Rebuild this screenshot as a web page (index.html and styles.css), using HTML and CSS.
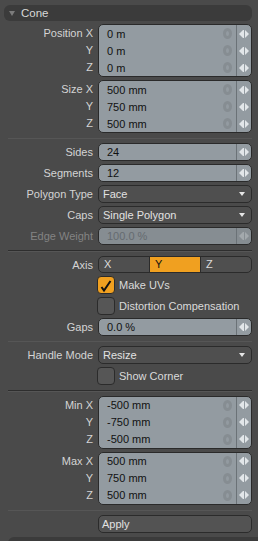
FILE: index.html
```html
<!DOCTYPE html>
<html lang="en">
<head>
    <meta charset="UTF-8">
    <title>Cone</title>
    <link rel="stylesheet" href="styles.css">
</head>
<body>
<div class="panel">

    <div class="header"><span class="caret"></span>Cone</div>

    <!-- Position / Size -->
    <div class="group">
        <div class="labels"><span>Position X</span><span>Y</span><span>Z</span></div>
        <div class="box">
            <div class="frow"><span class="val">0 m</span><span class="reset"></span><span class="spin"></span></div>
            <div class="frow"><span class="val">0 m</span><span class="reset"></span><span class="spin"></span></div>
            <div class="frow"><span class="val">0 m</span><span class="reset"></span><span class="spin"></span></div>
        </div>
    </div>
    <div class="group">
        <div class="labels"><span>Size X</span><span>Y</span><span>Z</span></div>
        <div class="box">
            <div class="frow"><span class="val">500 mm</span><span class="reset"></span><span class="spin"></span></div>
            <div class="frow"><span class="val">750 mm</span><span class="reset"></span><span class="spin"></span></div>
            <div class="frow"><span class="val">500 mm</span><span class="reset"></span><span class="spin"></span></div>
        </div>
    </div>

    <div class="sep"></div>

    <div class="row">
        <label>Sides</label>
        <div class="box single"><div class="frow"><span class="val">24</span><span class="spin"></span></div></div>
    </div>
    <div class="row">
        <label>Segments</label>
        <div class="box single"><div class="frow"><span class="val">12</span><span class="spin"></span></div></div>
    </div>
    <div class="row">
        <label>Polygon Type</label>
        <div class="drop">Face<span class="arrow"></span></div>
    </div>
    <div class="row">
        <label>Caps</label>
        <div class="drop">Single Polygon<span class="arrow"></span></div>
    </div>
    <div class="row disabled">
        <label>Edge Weight</label>
        <div class="box single"><div class="frow"><span class="val">100.0 %</span><span class="spin"></span></div></div>
    </div>

    <div class="sep"></div>

    <div class="row axis-row">
        <label>Axis</label>
        <div class="seg">
            <span>X</span>
            <span class="on">Y</span>
            <span>Z</span>
        </div>
    </div>
    <div class="row">
        <label></label>
        <div class="check on"><svg width="16" height="16" viewBox="0 0 16 16"><path d="M3.5 10 L6 13.5 L12.5 4" fill="none" stroke="#111" stroke-width="2"/></svg></div>
        <span class="check-text">Make UVs</span>
    </div>
    <div class="row">
        <label></label>
        <div class="check"></div>
        <span class="check-text">Distortion Compensation</span>
    </div>
    <div class="row">
        <label>Gaps</label>
        <div class="box single"><div class="frow"><span class="val">0.0 %</span><span class="spin"></span></div></div>
    </div>

    <div class="sep"></div>

    <div class="row">
        <label>Handle Mode</label>
        <div class="drop">Resize<span class="arrow"></span></div>
    </div>
    <div class="row">
        <label></label>
        <div class="check"></div>
        <span class="check-text">Show Corner</span>
    </div>

    <div class="sep"></div>

    <div class="group">
        <div class="labels"><span>Min X</span><span>Y</span><span>Z</span></div>
        <div class="box">
            <div class="frow"><span class="val">-500 mm</span><span class="reset"></span><span class="spin"></span></div>
            <div class="frow"><span class="val">-750 mm</span><span class="reset"></span><span class="spin"></span></div>
            <div class="frow"><span class="val">-500 mm</span><span class="reset"></span><span class="spin"></span></div>
        </div>
    </div>
    <div class="group">
        <div class="labels"><span>Max X</span><span>Y</span><span>Z</span></div>
        <div class="box">
            <div class="frow"><span class="val">500 mm</span><span class="reset"></span><span class="spin"></span></div>
            <div class="frow"><span class="val">750 mm</span><span class="reset"></span><span class="spin"></span></div>
            <div class="frow"><span class="val">500 mm</span><span class="reset"></span><span class="spin"></span></div>
        </div>
    </div>

    <div class="sep"></div>

    <div class="row">
        <label></label>
        <div class="button">Apply</div>
    </div>

    <div class="next-bar"></div>
</div>
</body>
</html>
```

FILE: styles.css
```css
body {
    margin: 0;
    background: #4a4a4a;
    font-family: 'Liberation Sans', Arial, sans-serif;
    font-size: 11px;
    color: #d4d4d4;
    overflow: hidden;
}

.panel {
    display: flex;
    flex-direction: column;
    gap: 3px;
    padding-top: 5px;
    height: 541px;
}

/* Header */
.header {
    height: 16px;
    line-height: 16px;
    margin: 0 6px 0 4px;
    background: #3b3b3b;
    border-radius: 6px;
    color: #d8d8d8;
    font-size: 11.5px;
    display: flex;
    align-items: center;
}

.caret {
    width: 0;
    height: 0;
    border-left: 3px solid transparent;
    border-right: 3px solid transparent;
    border-top: 5px solid #7c7c7c;
    margin: 0 6px 0 5px;
}

/* Rows */
.row, .group {
    display: flex;
    align-items: stretch;
    margin-right: 6px;
}

.row {
    height: 18px;
}

.row label, .labels {
    width: 93px;
    flex: none;
    margin-right: 5px;
    text-align: right;
    line-height: 18px;
}

.labels {
    display: flex;
    flex-direction: column;
    padding-top: 1px;
}

.labels span {
    height: 17px;
    line-height: 17px;
}

/* Numeric fields */
.box {
    flex: 1;
    background: #939ba1;
    border: 1px solid #2a2a2a;
    border-radius: 5px;
    color: #111;
    overflow: hidden;
}

.frow {
    height: 17px;
    display: flex;
    align-items: center;
}

.single .frow {
    height: 16px;
}

.val {
    flex: 1;
    padding-left: 8px;
}

.reset {
    box-sizing: border-box;
    width: 9px;
    height: 11px;
    border: 3px solid #868d92;
    border-radius: 50%;
    margin-right: 4px;
}

.spin {
    width: 14px;
    height: 100%;
    border-left: 1px solid #6b7277;
    position: relative;
    background: linear-gradient(#e2e6e9, #e2e6e9) no-repeat 6px center / 1px 8px;
}

.spin::before, .spin::after {
    content: '';
    position: absolute;
    top: 50%;
    margin-top: -4px;
    width: 0;
    height: 0;
    border-top: 4px solid transparent;
    border-bottom: 4px solid transparent;
}

.spin::before {
    left: 2px;
    border-right: 4px solid #e2e6e9;
}

.spin::after {
    left: 8px;
    border-left: 4px solid #e2e6e9;
}

.disabled label {
    color: #838383;
}

.disabled .box {
    background: #868d92;
    color: #656b70;
}

.disabled .spin {
    background-image: linear-gradient(#a3a9ad, #a3a9ad);
}

.disabled .spin::before {
    border-right-color: #a3a9ad;
}

.disabled .spin::after {
    border-left-color: #a3a9ad;
}

/* Dropdowns and buttons */
.drop, .button {
    flex: 1;
    background: #4f4f4f;
    border: 1px solid #2b2b2b;
    border-radius: 5px;
    color: #e2e2e2;
    line-height: 16px;
    padding-left: 4px;
    display: flex;
    align-items: center;
}

.arrow {
    margin-left: auto;
    margin-right: 6px;
    width: 0;
    height: 0;
    border-left: 3px solid transparent;
    border-right: 3px solid transparent;
    border-top: 4px solid #e6e6e6;
}

.button {
    padding-left: 3px;
    background: #535353;
}

/* Axis */
.axis-row {
    height: 17px;
}

.seg {
    flex: 1;
    display: flex;
    border: 1px solid #2b2b2b;
    border-radius: 5px;
    overflow: hidden;
    background: #4f4f4f;
}

.seg span {
    flex: 1;
    padding-left: 5px;
    line-height: 15px;
    color: #dcdcdc;
    border-left: 1px solid #2b2b2b;
}

.seg span:first-child {
    border-left: none;
}

.seg .on {
    background: #f0a020;
    color: #111;
}

/* Checkboxes */
.check {
    width: 16px;
    height: 16px;
    border: 1px solid #2b2b2b;
    border-radius: 4px;
    background: #565656;
    flex: none;
    margin-left: -1px;
}

.check.on {
    background: #f0a020;
}

.check-text {
    margin-left: 4px;
    line-height: 18px;
    color: #dadada;
}

/* Separators */
.sep {
    height: 1px;
    background: #2e2e2e;
    border-bottom: 1px solid #565656;
    margin: 2px 6px 1px 8px;
}

.next-bar {
    height: 20px;
    margin: 1px 0 0 8px;
    background: #3b3b3b;
    border-radius: 6px 0 0 0;
}
```
